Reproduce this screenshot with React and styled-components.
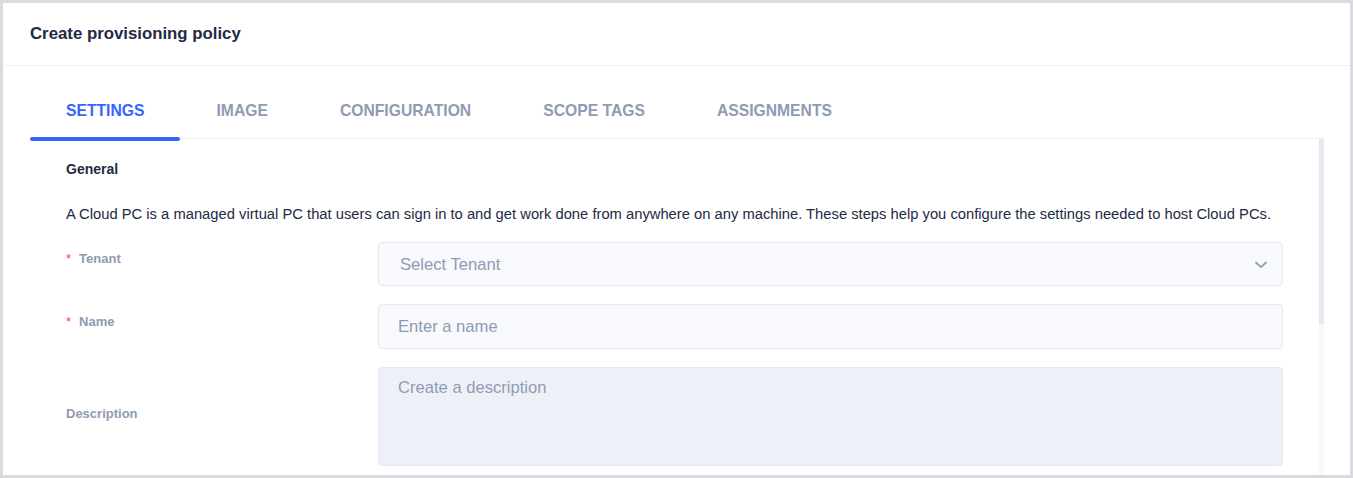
import React from 'react';
import styled, { createGlobalStyle } from 'styled-components';

const GlobalStyle = createGlobalStyle`
  html, body {
    margin: 0;
    padding: 0;
    background: #dadbdf;
  }
  body {
    font-family: "Liberation Sans", Arial, sans-serif;
    color: #222b45;
  }
  * { box-sizing: border-box; }
`;

const Page = styled.div`
  padding: 3px;
  height: 478px;
`;

const Card = styled.div`
  background: #ffffff;
  height: 472px;
  display: flex;
  flex-direction: column;
  overflow: hidden;
`;

const Header = styled.div`
  height: 63px;
  flex: none;
  display: flex;
  align-items: center;
  padding: 0 27px;
  border-bottom: 1px solid #edf1f7;
  font-size: 16.8px;
  font-weight: 700;
  color: #222b45;
`;

const Body = styled.div`
  flex: 1;
  min-height: 0;
  display: flex;
  flex-direction: column;
  padding: 0 26px 0 27px;
`;

const TabList = styled.div`
  margin-top: 25px;
  display: flex;
  border-bottom: 1px solid #edf1f7;
  flex: none;
`;

const Tab = styled.div`
  position: relative;
  padding: 10px 36px 17px;
  line-height: 20px;
  font-size: 15.7px;
  font-weight: 700;
  text-transform: uppercase;
  color: ${(p) => (p.$active ? '#3366ff' : '#8f9bb3')};

  &::after {
    content: '';
    display: ${(p) => (p.$active ? 'block' : 'none')};
    position: absolute;
    left: 0;
    right: 0;
    bottom: -3px;
    height: 4px;
    border-radius: 2px;
    background: #3366ff;
  }
`;

const ScrollArea = styled.div`
  flex: 1;
  min-height: 0;
  display: flex;
`;

const Viewport = styled.div`
  flex: 1;
  min-width: 0;
  overflow: hidden;
`;

const Track = styled.div`
  width: 5px;
  flex: none;
  background: #f7f9fc;
  display: flex;
  flex-direction: column;
`;

const Thumb = styled.div`
  height: 185px;
  background: #e4e9f2;
`;

const Content = styled.div`
  padding: 20px 36px 40px 36px;
  min-height: 614px;
`;

const SectionTitle = styled.div`
  font-size: 14px;
  font-weight: 700;
  line-height: 20px;
  color: #222b45;
`;

const Paragraph = styled.p`
  margin: 25px 0 18px;
  font-size: 14.75px;
  line-height: 20px;
  color: #222b45;
  white-space: nowrap;
`;

const Form = styled.div`
  display: grid;
  grid-template-columns: 312px 1fr;
  row-gap: 18px;
  align-items: center;
`;

const Label = styled.div`
  font-size: 13px;
  font-weight: 700;
  color: #8f9bb3;
  padding-bottom: ${(p) => p.$lift || 0}px;
`;

const Required = styled.span`
  color: #ff3d71;
  margin-right: 8px;
  font-weight: 400;
`;

const Field = styled.div`
  height: ${(p) => p.$h || 44}px;
  background: ${(p) => (p.$area ? '#edf1f7' : '#f7f9fc')};
  border: 1px solid #e4e9f2;
  border-radius: 4px;
  display: flex;
  align-items: ${(p) => (p.$area ? 'flex-start' : 'center')};
  justify-content: space-between;
  padding: ${(p) => (p.$area ? '10px 15px 0 19px' : '1px 15px 0 19px')};
  padding-left: ${(p) => p.$pl || 19}px;
  font-size: 16.6px;
  color: #8f9bb3;
`;

const Chevron = () => (
  <svg width="12" height="8" viewBox="0 0 12 8" fill="none">
    <path d="M1 1.5L6 6.2l5-4.7" stroke="#8f9bb3" strokeWidth="1.8" strokeLinecap="round" strokeLinejoin="round" />
  </svg>
);

const tabs = ['Settings', 'Image', 'Configuration', 'Scope Tags', 'Assignments'];

export default function App() {
  return (
    <>
      <GlobalStyle />
      <Page>
        <Card>
          <Header>Create provisioning policy</Header>
          <Body>
            <TabList>
              {tabs.map((t, i) => (
                <Tab key={t} $active={i === 0}>{t}</Tab>
              ))}
            </TabList>
            <ScrollArea>
              <Viewport>
                <Content>
                  <SectionTitle>General</SectionTitle>
                  <Paragraph>
                    A Cloud PC is a managed virtual PC that users can sign in to and get work done from anywhere on any machine. These steps help you configure the settings needed to host Cloud PCs.
                  </Paragraph>
                  <Form>
                    <Label $lift={12}><Required>*</Required>Tenant</Label>
                    <Field $pl={21}>
                      Select Tenant
                      <Chevron />
                    </Field>
                    <Label $lift={10}><Required>*</Required>Name</Label>
                    <Field $h={45}>Enter a name</Field>
                    <Label $lift={6}>Description</Label>
                    <Field $h={99} $area>Create a description</Field>
                  </Form>
                </Content>
              </Viewport>
              <Track>
                <Thumb />
              </Track>
            </ScrollArea>
          </Body>
        </Card>
      </Page>
    </>
  );
}
